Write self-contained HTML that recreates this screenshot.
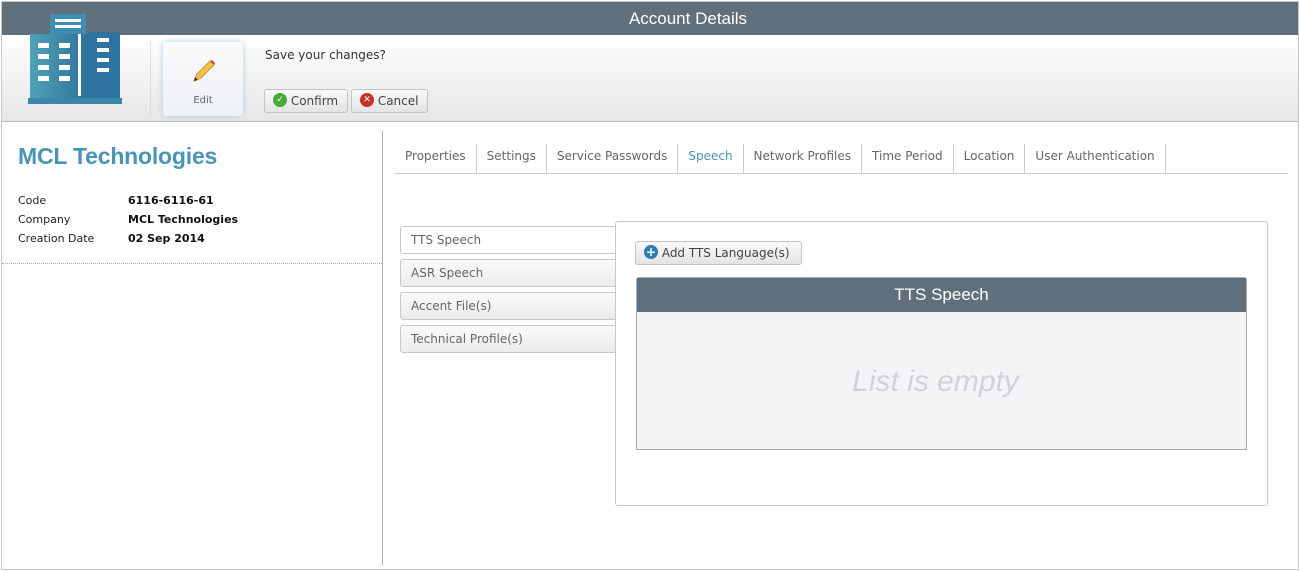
<!DOCTYPE html>
<html><head><style>
*{box-sizing:border-box;margin:0;padding:0}
body{width:1300px;height:571px;background:#fff;font-family:"DejaVu Sans","Liberation Sans",sans-serif;font-size:12px;color:#555;position:relative;overflow:hidden}
.abs{position:absolute}
.frame{left:1px;top:1px;width:1298px;height:569px;border:1px solid #c8c8c8}
.hdr{left:2px;top:2px;width:1296px;height:33px;background:#5f707c;color:#fff;font-family:"Liberation Sans",sans-serif;font-size:17px;text-align:center;line-height:33px;padding-left:76px}
.tb{left:2px;top:35px;width:1296px;height:87px;background:linear-gradient(#fff,#e6e6e6);border-bottom:1px solid #bbb}
.btn{border:1px solid #c4c4c4;border-radius:3px;background:linear-gradient(#fafafa,#e4e4e4);height:24px;line-height:22px;color:#444;font-size:12px}
.ic{display:inline-block;width:14px;height:14px;border-radius:50%;vertical-align:middle;margin-top:-3px;color:#fff;font-size:9px;text-align:center;line-height:14px}
.tabs span{display:inline-block;padding:0 10px;border-right:1px solid #ccc;height:30px;line-height:24px;color:#666;font-size:12px}
.side{left:400px;width:218px;height:28px;border:1px solid #c8c8c8;border-radius:3px;background:linear-gradient(#fafafa,#ececec);padding-left:10px;line-height:26px;color:#666;font-size:12px}
</style></head><body>
<div class="abs frame"></div>
<div class="abs hdr">Account Details</div>
<div class="abs tb"></div>
<svg class="abs" style="left:26px;top:12px" width="98" height="93" viewBox="0 0 98 93">
<defs><linearGradient id="g" x1="0" x2="1"><stop offset="0" stop-color="#4fa3b6"/><stop offset="1" stop-color="#2d6d99"/></linearGradient></defs>
<rect x="24" y="2" width="36" height="20" fill="#3f8db0"/>
<rect x="29" y="7" width="26" height="3" fill="#fff"/><rect x="29" y="13" width="26" height="3" fill="#fff"/>
<rect x="4" y="22" width="62" height="70" fill="url(#g)"/>
<rect x="62" y="20" width="32" height="72" fill="#2f74a0"/>
<rect x="2" y="86" width="94" height="6" fill="#3a87aa"/>
<rect x="52" y="22" width="3" height="62" fill="#fff"/>
<g fill="#fff"><rect x="12" y="31" width="11" height="5"/><rect x="33" y="31" width="11" height="5"/><rect x="12" y="42" width="11" height="5"/><rect x="33" y="42" width="11" height="5"/><rect x="12" y="53" width="11" height="5"/><rect x="33" y="53" width="11" height="5"/><rect x="12" y="64" width="11" height="5"/><rect x="33" y="64" width="11" height="5"/>
<rect x="71" y="26" width="12" height="4"/><rect x="71" y="36" width="12" height="4"/><rect x="71" y="46" width="12" height="4"/><rect x="71" y="56" width="12" height="4"/></g>
</svg>
<div class="abs" style="left:150px;top:42px;height:75px;border-left:1px dotted #ccc"></div>
<div class="abs" style="left:163px;top:42px;width:80px;height:74px;border-radius:3px;background:linear-gradient(#fafafa,#eef2f5);box-shadow:0 0 6px #a9cde0;text-align:center;font-size:10px;color:#666">
<svg style="margin-top:16px" width="26" height="26" viewBox="0 0 26 26"><path d="M4 23 L7 16 L20 3 L24 7 L11 20 Z" fill="#f3c24b" stroke="#c9962a" stroke-width="1"/><path d="M20 3 L24 7 L25 5 L22 2Z" fill="#d24b3b"/><path d="M4 23 L5 19 L8 22Z" fill="#333"/></svg>
<div style="margin-top:8px">Edit</div></div>
<div class="abs" style="left:265px;top:48px;color:#333;font-size:12px">Save your changes?</div>
<div class="abs btn" style="left:264px;top:89px;width:84px;padding-left:8px"><span class="ic" style="background:#4aa83a">✓</span> Confirm</div>
<div class="abs btn" style="left:351px;top:89px;width:77px;padding-left:8px"><span class="ic" style="background:#c0342a">✕</span> Cancel</div>

<div class="abs" style="left:18px;top:143px;font-family:'Liberation Sans',sans-serif;font-weight:bold;font-size:23px;color:#4a95b4;letter-spacing:-0.2px">MCL Technologies</div>
<div class="abs" style="left:18px;top:191px;font-size:11px;color:#222;line-height:19px">Code<br>Company<br>Creation Date</div>
<div class="abs" style="left:128px;top:191px;font-size:11px;color:#111;font-weight:bold;line-height:19px">6116-6116-61<br>MCL Technologies<br>02 Sep 2014</div>
<div class="abs" style="left:2px;top:263px;width:380px;border-top:1px dotted #aaa"></div>
<div class="abs" style="left:382px;top:131px;height:434px;border-left:1px solid #aaa"></div>

<div class="abs tabs" style="left:395px;top:144px;width:893px;height:30px;border-bottom:1px solid #ccc;white-space:nowrap;font-size:0"><span>Properties</span><span>Settings</span><span>Service Passwords</span><span style="color:#4a95b4">Speech</span><span>Network Profiles</span><span>Time Period</span><span>Location</span><span>User Authentication</span></div>

<div class="abs side" style="top:226px;background:#fff">TTS Speech</div>
<div class="abs side" style="top:259px">ASR Speech</div>
<div class="abs side" style="top:292px">Accent File(s)</div>
<div class="abs side" style="top:325px">Technical Profile(s)</div>
<div class="abs" style="left:615px;top:221px;width:653px;height:285px;border:1px solid #c8c8c8;border-radius:3px;background:#fff"></div>
<div class="abs btn" style="left:635px;top:241px;width:167px;padding-left:8px;border-radius:3px"><span class="ic" style="background:#2f7fa8;font-size:12px;font-weight:bold">+</span> Add TTS Language(s)</div>
<div class="abs" style="left:636px;top:277px;width:611px;height:173px;border:1px solid #aaa;background:#f3f4f6;border-radius:3px 3px 0 0">
<div style="height:34px;background:#5f707c;color:#fff;font-family:'Liberation Sans',sans-serif;font-size:17px;text-align:center;line-height:33px">TTS Speech</div>
<div style="text-align:center;font-family:'Liberation Sans',sans-serif;font-style:italic;font-size:30px;color:#cfd2d6;margin-top:53px;padding-right:12px">List is empty</div></div>
</body></html>
